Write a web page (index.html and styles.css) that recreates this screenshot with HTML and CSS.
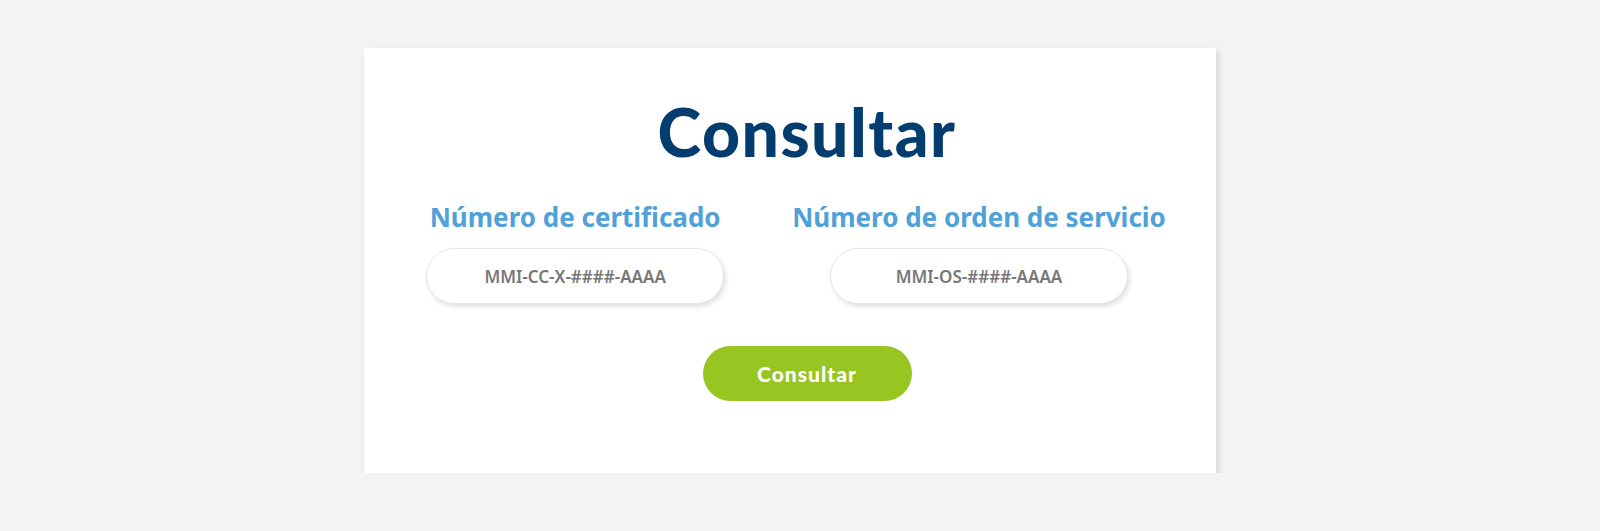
FILE: index.html
```html
<!DOCTYPE html>
<html lang="es">
<head>
  <meta charset="UTF-8">
  <meta name="viewport" content="width=device-width, initial-scale=1">
  <title>Consultar</title>
  <link rel="stylesheet" href="styles.css">
</head>
<body>

<div class="card">
  <h1>Consultar</h1>

  <div class="fields">
    <div class="field">
      <label for="cert">Número de certificado</label>
      <input type="text" id="cert" placeholder="MMI-CC-X-####-AAAA">
    </div>
    <div class="field">
      <label for="orden">Número de orden de servicio</label>
      <input type="text" id="orden" placeholder="MMI-OS-####-AAAA">
    </div>
  </div>

  <button class="btn">Consultar</button>
</div>

</body>
</html>
```

FILE: styles.css
```css
* { margin: 0; padding: 0; box-sizing: border-box; }
body {
  font-family: 'Noto Sans', 'Open Sans', sans-serif;
  background: #f3f3f3;
  padding-top: 48px;
}
.card {
  background: #ffffff;
  width: 852px;
  height: 425px;
  margin-left: 364px;
  padding: 46px 0 0 34px;
  box-shadow: 3px 3px 6px rgba(0,0,0,0.12);
  display: flex;
  flex-direction: column;
  align-items: center;
}
h1 {
  font-family: 'Lato', sans-serif;
  font-weight: 900;
  font-size: 66px;
  line-height: 76px;
  letter-spacing: 1.5px;
  color: #033d70;
}
.fields {
  display: flex;
  justify-content: center;
  gap: 68px;
  margin-top: 30px;
  margin-left: -22px;
}
.field {
  display: flex;
  flex-direction: column;
  align-items: center;
}
label {
  font-size: 26px;
  font-weight: 700;
  line-height: 34px;
  color: #4fa1d8;
  white-space: nowrap;
}
input {
  width: 298px;
  height: 56px;
  margin-top: 14px;
  border: 1px solid #e6e6e6;
  border-radius: 28px;
  background: #fff;
  box-shadow: 2px 3px 5px rgba(0,0,0,0.12);
  text-align: center;
  font-family: 'Noto Sans', 'Open Sans', sans-serif;
  font-size: 17px;
  font-weight: 600;
  outline: none;
}
input::placeholder {
  color: #777777;
}
.btn {
  margin-top: 42px;
  width: 209px;
  height: 55px;
  border: none;
  border-radius: 28px;
  background: #97c521;
  color: #ffffff;
  font-family: 'Lato', sans-serif;
  font-weight: 900;
  font-size: 21px;
  letter-spacing: 1px;
  cursor: pointer;
}
```
